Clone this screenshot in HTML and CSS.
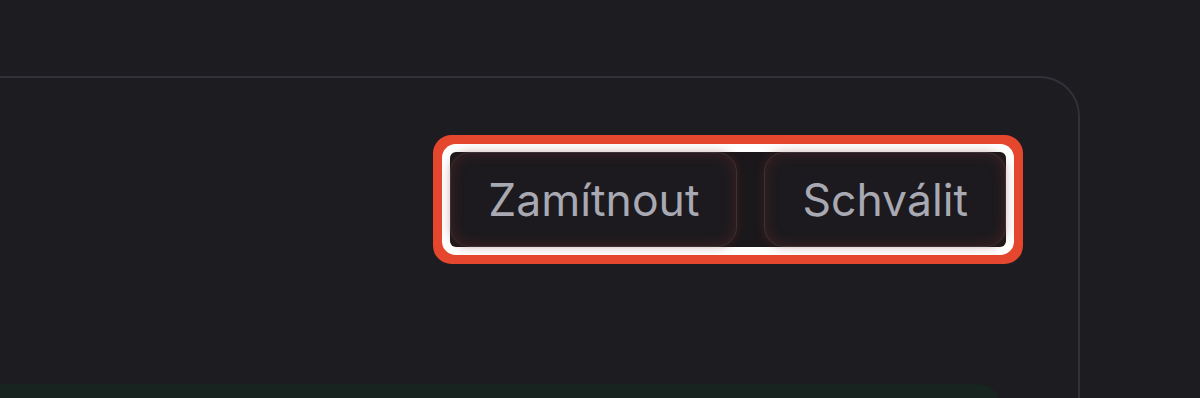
FILE: index.html
```html
<!DOCTYPE html>
<html lang="cs">
<head>
<meta charset="utf-8">
<link rel="stylesheet" href="styles.css">
</head>
<body>
<div class="card">
  <div class="toolbar">
    <div class="actions">
      <button class="btn">Zamítnout</button>
      <button class="btn">Schválit</button>
    </div>
  </div>
  <div class="status"></div>
</div>
</body>
</html>
```
FILE: styles.css
```css
html, body {
  margin: 0;
  padding: 0;
  background: #1d1c21;
  height: 100%;
  overflow: hidden;
}
body {
  font-family: Inter, "Noto Sans", sans-serif;
}
.card {
  margin-top: 76px;
  margin-left: -60px;
  width: 1140px;
  height: 322px;
  box-sizing: border-box;
  border: 2px solid #323137;
  border-bottom: none;
  border-radius: 40px 40px 0 0;
  background: #1d1c21;
  padding-top: 74px;
  padding-right: 72px;
  display: flex;
  flex-direction: column;
  overflow: hidden;
}
.toolbar {
  display: flex;
  justify-content: flex-end;
}
.actions {
  display: flex;
  gap: 27px;
  background: #1b181b;
  border-radius: 6px;
  box-shadow: 0 0 0 8px #ffffff, 0 0 0 17px #e4472d;
}
.btn {
  font-family: Inter, "Noto Sans", sans-serif;
  font-size: 44.5px;
  font-weight: 400;
  color: #a8a9b3;
  background: #1c1a1e;
  border: 1px solid #3a3338;
  border-radius: 20px;
  height: 95px;
  padding: 0 37px;
  box-shadow: inset 0 0 14px rgba(150, 50, 45, 0.3), 0 0 10px rgba(120, 40, 35, 0.35);
  cursor: pointer;
}
.status {
  margin-top: 137px;
  margin-left: 58px;
  width: 998px;
  height: 40px;
  background: #18241f;
  border-top-right-radius: 60px 36px;
}
```
